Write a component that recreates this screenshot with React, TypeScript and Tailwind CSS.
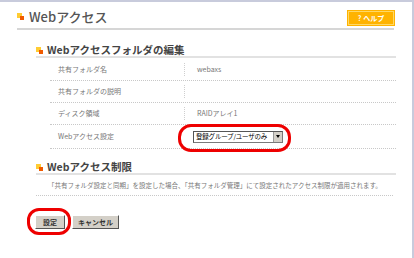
import { ReactNode } from 'react';

const jp = { fontFamily: '"Noto Sans CJK JP", "Noto Sans", sans-serif' };

function Mark() {
  return (
    <span className="relative inline-block w-[7px] h-[7px] flex-shrink-0">
      <span className="absolute left-0 top-0 w-[5px] h-[5px] bg-[#ffcc33]" />
      <span className="absolute right-0 bottom-0 w-[4px] h-[4px] bg-[#f05a00]" />
    </span>
  );
}

function SectionHead({ children }: { children: ReactNode }) {
  return (
    <div className="flex items-center gap-[4px] h-[14px] border-b-2 border-[#e2e2e2]">
      <Mark />
      <span className="text-[10.5px] font-bold text-[#444] leading-none">{children}</span>
    </div>
  );
}

function Row({ label, children }: { label: string; children?: ReactNode }) {
  return (
    <div className="flex items-center h-[22px] border-b border-dotted border-[#c8c8c8]">
      <div className="w-[134px] pl-[8px] text-[7px] text-[#777] leading-none">{label}</div>
      <div className="h-[13px] border-l border-dotted border-[#cfcfcf]" />
      <div className="pl-[12px] flex items-center text-[7px] text-[#777] leading-none">{children}</div>
    </div>
  );
}

export default function App() {
  return (
    <div style={jp} className="w-[414px] h-[258px] bg-white border-t-2 border-r-2 border-[#c8cbdc] overflow-hidden">
      <div className="pl-[17px] pr-[18px]">
        <div className="flex items-end justify-between h-[28px] border-b-2 border-[#d6d6d6] pb-[3px]">
          <div className="flex items-center gap-[5px] mb-[2px]">
            <Mark />
            <span className="text-[13px] text-[#555] leading-none font-medium">Webアクセス</span>
          </div>
          <button className="w-[46px] h-[14px] bg-[#ffb300] border border-[#ffd966] outline outline-1 outline-[#ffb300] text-white text-[7px] font-bold leading-none flex items-center justify-center gap-[2px]">
            <span>?</span>
            <span>ヘルプ</span>
          </button>
        </div>
      </div>

      <div className="ml-[36px] mr-[16px] mt-[14px]">
        <SectionHead>Webアクセスフォルダの編集</SectionHead>
        <div className="ml-[14px] mt-[1px]">
          <Row label="共有フォルダ名">webaxs</Row>
          <Row label="共有フォルダの説明" />
          <Row label="ディスク領域">RAIDアレイ1</Row>
          <div className="relative flex items-center h-[24px] border-b border-dotted border-[#c8c8c8]">
            <div className="w-[134px] pl-[8px] text-[7px] text-[#777] leading-none">Webアクセス設定</div>
            <div className="pl-[9px] flex items-center">
              <div className="flex items-center h-[12px] w-[90px] border border-[#7a7a7a] border-t-[#555] border-l-[#555] bg-white">
                <span className="flex-1 pl-[2px] text-[6.5px] tracking-[-0.2px] text-black leading-none whitespace-nowrap">登録グループ/ユーザのみ</span>
                <span className="w-[9px] h-[10px] bg-[#d4d0c8] border-l border-[#999] flex items-center justify-center flex-shrink-0">
                  <span className="w-0 h-0 border-l-[2.5px] border-r-[2.5px] border-t-[3px] border-l-transparent border-r-transparent border-t-black" />
                </span>
              </div>
            </div>
            <div className="absolute left-[128px] top-[-1px] w-[113px] h-[28px] rounded-[13px] border-[3px] border-[#ee0000]" />
          </div>
        </div>

        <div className="mt-[12px]">
          <SectionHead>Webアクセス制限</SectionHead>
          <div className="h-[21px] flex items-center pl-[12px] border-b border-dotted border-[#c8c8c8] mr-[3px]">
            <span className="text-[6.5px] text-[#777] leading-none whitespace-nowrap">
              「共有フォルダ設定と同期」を設定した場合、「共有フォルダ管理」にて設定されたアクセス制限が適用されます。
            </span>
          </div>
        </div>
      </div>

      <div className="relative flex items-center gap-[7px] ml-[35px] mt-[19px]">
        <button className="w-[30px] h-[14px] bg-[#d4d0c8] border border-[#fff] border-r-[#555] border-b-[#555] text-[7px] font-bold text-[#333] leading-none flex items-center justify-center">
          設定
        </button>
        <button className="w-[47px] h-[14px] bg-[#d4d0c8] border border-[#fff] border-r-[#555] border-b-[#555] text-[7px] font-bold text-[#333] leading-none flex items-center justify-center">
          キャンセル
        </button>
        <div className="absolute left-[-8px] top-[-7px] w-[44px] h-[27px] rounded-[12px] border-[3px] border-[#ee0000]" />
      </div>
    </div>
  );
}
